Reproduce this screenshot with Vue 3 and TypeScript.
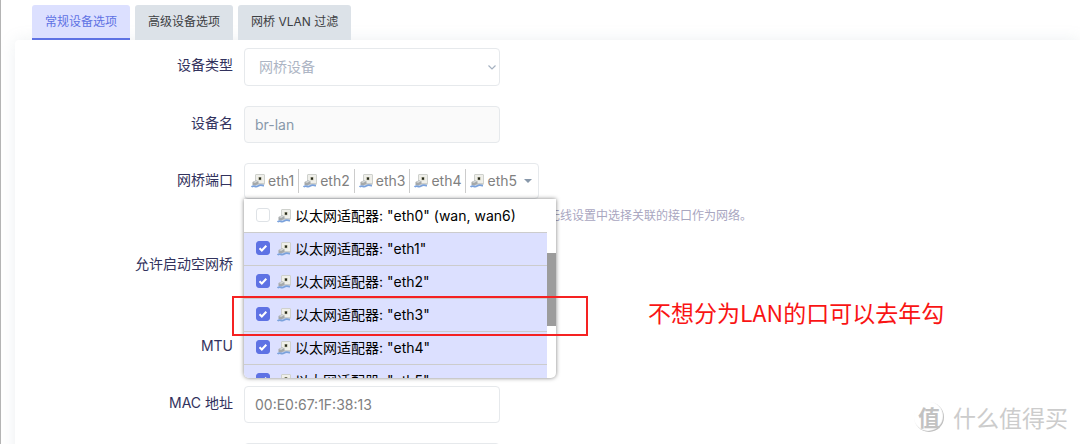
<script setup lang="ts">
import { ref } from 'vue'

interface Port {
  name: string
  note: string
  checked: boolean
}

const tabs = ['常规设备选项', '高级设备选项', '网桥 VLAN 过滤']
const activeTab = ref(0)

const ports = ref<Port[]>([
  { name: 'eth0', note: ' (wan, wan6)', checked: false },
  { name: 'eth1', note: '', checked: true },
  { name: 'eth2', note: '', checked: true },
  { name: 'eth3', note: '', checked: true },
  { name: 'eth4', note: '', checked: true },
  { name: 'eth5', note: '', checked: true },
])
const deviceName = ref('br-lan')
const allowEmpty = ref(false)
const mtu = ref('1500')
</script>

<template>
  <svg class="sprite" aria-hidden="true">
    <symbol id="port" viewBox="0 0 14 14">
      <rect x="4.500" y=".5" width="9" height="9.500" rx=".5" fill="#efefea" stroke="#cfd1cd" />
      <path d="M6 10h7.500" stroke="#b9bcba" />
      <rect x="7.300" y="3" width="3.200" height="3.200" fill="#b5b59a" />
      <rect x="8" y="3.500" width="2" height="2.200" fill="#26281f" />
      <path d="M1.500 8l3.500-1.800 2.500 1v2.600L4 11.800 1.500 11z" fill="#a4a8aa" />
      <path d="M2 8l3-1.500 2 .8-3 1.700z" fill="#d3d6d6" />
      <path d="M.5 13C2.500 10.800 4.500 13.600 7 12S10.500 11.400 13 11.600" fill="none" stroke="#7ba2dc" stroke-width="1.800" />
    </symbol>
  </svg>
  <div class="page">
    <nav class="tabs">
      <button v-for="(t, i) in tabs" :key="t" type="button" :class="{ active: i === activeTab }" @click="activeTab = i">{{ t }}</button>
    </nav>
    <form class="card" @submit.prevent>
      <div class="row">
        <label for="type">设备类型</label>
        <div class="select-wrap">
          <select id="type" disabled><option>网桥设备</option></select>
          <svg class="chevron" viewBox="0 0 8 5"><path d="M.5.5L4 4 7.500.5" fill="none" stroke="#a5b1c0" stroke-width="1.200" /></svg>
        </div>
      </div>
      <div class="row">
        <label for="name">设备名</label>
        <input id="name" v-model="deviceName" class="box readonly" type="text" readonly />
      </div>
      <div class="row">
        <span class="label">网桥端口</span>
        <div class="value">
          <div class="picker">
            <button type="button" class="chosen" aria-label="网桥端口" aria-expanded="true">
              <span v-for="p in ports.filter(q => q.checked)" :key="p.name" class="chip"><svg class="port"><use href="#port" /></svg>{{ p.name }}</span>
              <svg class="caret" viewBox="0 0 8 4"><path d="M0 0h8L4 4z" fill="#8898aa" /></svg>
            </button>
            <div class="menu">
              <ul>
                <li v-for="p in ports" :key="p.name" :class="{ on: p.checked }">
                  <label>
                    <input v-model="p.checked" type="checkbox" />
                    <svg class="port"><use href="#port" /></svg>
                    <span>以太网适配器: "{{ p.name }}"{{ p.note }}</span>
                  </label>
                </li>
              </ul>
              <div class="track"><div class="thumb"></div></div>
            </div>
          </div>
          <p class="hint">指定连接到此网桥的有线端口。要连接无线网络，请在无线设置中选择关联的接口作为网络。</p>
        </div>
      </div>
      <div class="row">
        <label for="empty">允许启动空网桥</label>
        <div class="value">
          <div class="tick"><input id="empty" v-model="allowEmpty" type="checkbox" /></div>
        </div>
      </div>
      <div class="row">
        <label for="mtu">MTU</label>
        <input id="mtu" v-model="mtu" class="box" type="text" />
      </div>
      <div class="row">
        <label for="mac">MAC 地址</label>
        <input id="mac" class="box" type="text" placeholder="00:E0:67:1F:38:13" />
      </div>
      <div class="row">
        <span class="label"></span>
        <input class="box" type="text" aria-label="MAC" />
      </div>
    </form>
    <div class="frame"></div>
    <p class="note">不想分为LAN的口可以去年勾</p>
    <div class="mark"><span class="seal">值</span><span>什么值得买</span></div>
  </div>
</template>

<style>
body {
  overflow: hidden;
}
</style>

<style scoped>
.sprite {
  position: absolute;
  width: 0;
  height: 0;
}
.page {
  position: relative;
  height: 100vh;
  overflow: hidden;
  box-sizing: border-box;
  border-left: 1px solid #b4b4b4;
  padding: 5px 0 0 14px;
  background: #fff;
  font: 14px/20px Inter, "Noto Sans CJK SC", sans-serif;
  color: #32325d;
}
button,
input,
select {
  font: inherit;
  box-sizing: border-box;
  margin: 0;
}
.tabs {
  display: flex;
  gap: 5px;
  padding-left: 17px;
}
.tabs button {
  height: 35px;
  padding: 0 13px 2px;
  border: 0;
  border-radius: 3px 3px 0 0;
  background: #dce2e8;
  color: #3c4043;
  font-size: 12px;
}
.tabs .active {
  padding-bottom: 0;
  border-bottom: 2px solid #5e72e4;
  background: #dce0ff;
  color: #5e72e4;
}
.card {
  display: flex;
  flex-direction: column;
  gap: 20px;
  padding: 8px 0 0;
  border-radius: 4px 0 0 0;
  background: #fff;
  box-shadow: 0 0 16px rgba(136, 152, 170, 0.15);
}
.row {
  display: grid;
  grid-template-columns: 218px minmax(0, 1fr);
  column-gap: 11px;
  align-items: start;
}
.row > label,
.row > .label {
  padding-top: 7px;
  text-align: right;
}
.select-wrap {
  position: relative;
  width: 256px;
}
select,
.box {
  display: block;
  width: 256px;
  height: 37px;
  padding: 0 10px;
  border: 1px solid #e6e9ec;
  border-radius: 4px;
  background: #fff;
  color: #8898aa;
}
select {
  width: 100%;
  height: 38px;
  padding: 0 14px;
  appearance: none;
  color: #adb5c4;
  opacity: 1;
}
.readonly {
  background: #fafafa;
}
.box::placeholder {
  color: #808080;
}
.chevron {
  position: absolute;
  right: 4px;
  top: 17px;
  width: 8px;
  height: 5px;
}
.value {
  min-width: 0;
}
.picker {
  position: relative;
  width: max-content;
}
.chosen {
  display: flex;
  align-items: center;
  height: 36px;
  padding: 0 6px 0 3px;
  border: 1px solid #e6e9ec;
  border-radius: 4px;
  background: #fff;
  color: #808080;
}
.chip {
  display: flex;
  align-items: center;
  gap: 3px;
  height: 24px;
  padding: 0 4px 0 3px;
  border-right: 1px solid #ccc;
}
.chip + .chip {
  padding-left: 4px;
}
.chip:last-of-type {
  border-right: 0;
}
.caret {
  width: 8px;
  height: 4px;
  margin-left: 3px;
}
.port {
  flex: none;
  width: 14px;
  height: 14px;
}
.menu {
  position: absolute;
  z-index: 2;
  top: 36px;
  left: 0;
  display: flex;
  width: 312px;
  height: 179px;
  overflow: hidden;
  border-radius: 0 0 5px 5px;
  background: #fff;
  box-shadow: 0 0 4px rgba(0, 0, 0, 0.5);
  color: #000;
}
ul {
  flex: 1;
  margin: 0;
  padding: 1px 0 0;
  list-style: none;
}
li {
  box-sizing: border-box;
  height: 33px;
  border-bottom: 1px solid #ccc;
}
li.on {
  background: #dce0ff;
}
li label {
  display: flex;
  align-items: center;
  height: 32px;
  padding-left: 12px;
}
li .port {
  margin: 0 4px 0 7px;
}
input[type='checkbox'] {
  appearance: none;
  width: 14px;
  height: 14px;
  margin-bottom: 3px;
  border: 1px solid #dee2e6;
  border-radius: 3px;
  background: #fff;
}
input[type='checkbox']:checked {
  border-color: #5e72e4;
  background: #5e72e4 url("data:image/svg+xml,%3Csvg xmlns='http://www.w3.org/2000/svg' viewBox='0 0 12 12'%3E%3Cpath d='M2.500 6.200l2.300 2.300 4.500-4.800' fill='none' stroke='white' stroke-width='2'/%3E%3C/svg%3E") center / 12px no-repeat;
}
.track {
  width: 9px;
  padding-top: 54px;
}
.thumb {
  height: 73px;
  background: #9c9c9c;
}
.hint {
  height: 28px;
  margin: 0;
  padding-left: 16px;
  color: #a9a6bf;
  font-size: 12px;
  line-height: 34px;
  white-space: nowrap;
}
.tick {
  height: 62px;
  padding-top: 8px;
  box-sizing: border-box;
}
.frame {
  position: absolute;
  z-index: 3;
  left: 231px;
  top: 296px;
  width: 352px;
  height: 36px;
  border: 2px solid #f52222;
}
.note {
  position: absolute;
  left: 647px;
  top: 296px;
  margin: 0;
  color: #f91414;
  font: 23px/32px "Noto Sans CJK SC", sans-serif;
}
.mark {
  position: absolute;
  right: 12px;
  bottom: 12px;
  display: flex;
  align-items: center;
  gap: 9px;
  color: #ccc;
  font: 23px/30px "Noto Sans CJK SC", sans-serif;
}
.seal {
  box-sizing: border-box;
  width: 30px;
  height: 30px;
  border-radius: 50%;
  box-shadow: inset -1px -1px 1px #bbb;
  color: #c2c2c2;
  font-size: 22px;
  font-weight: 700;
  line-height: 28px;
  text-align: center;
}
</style>
